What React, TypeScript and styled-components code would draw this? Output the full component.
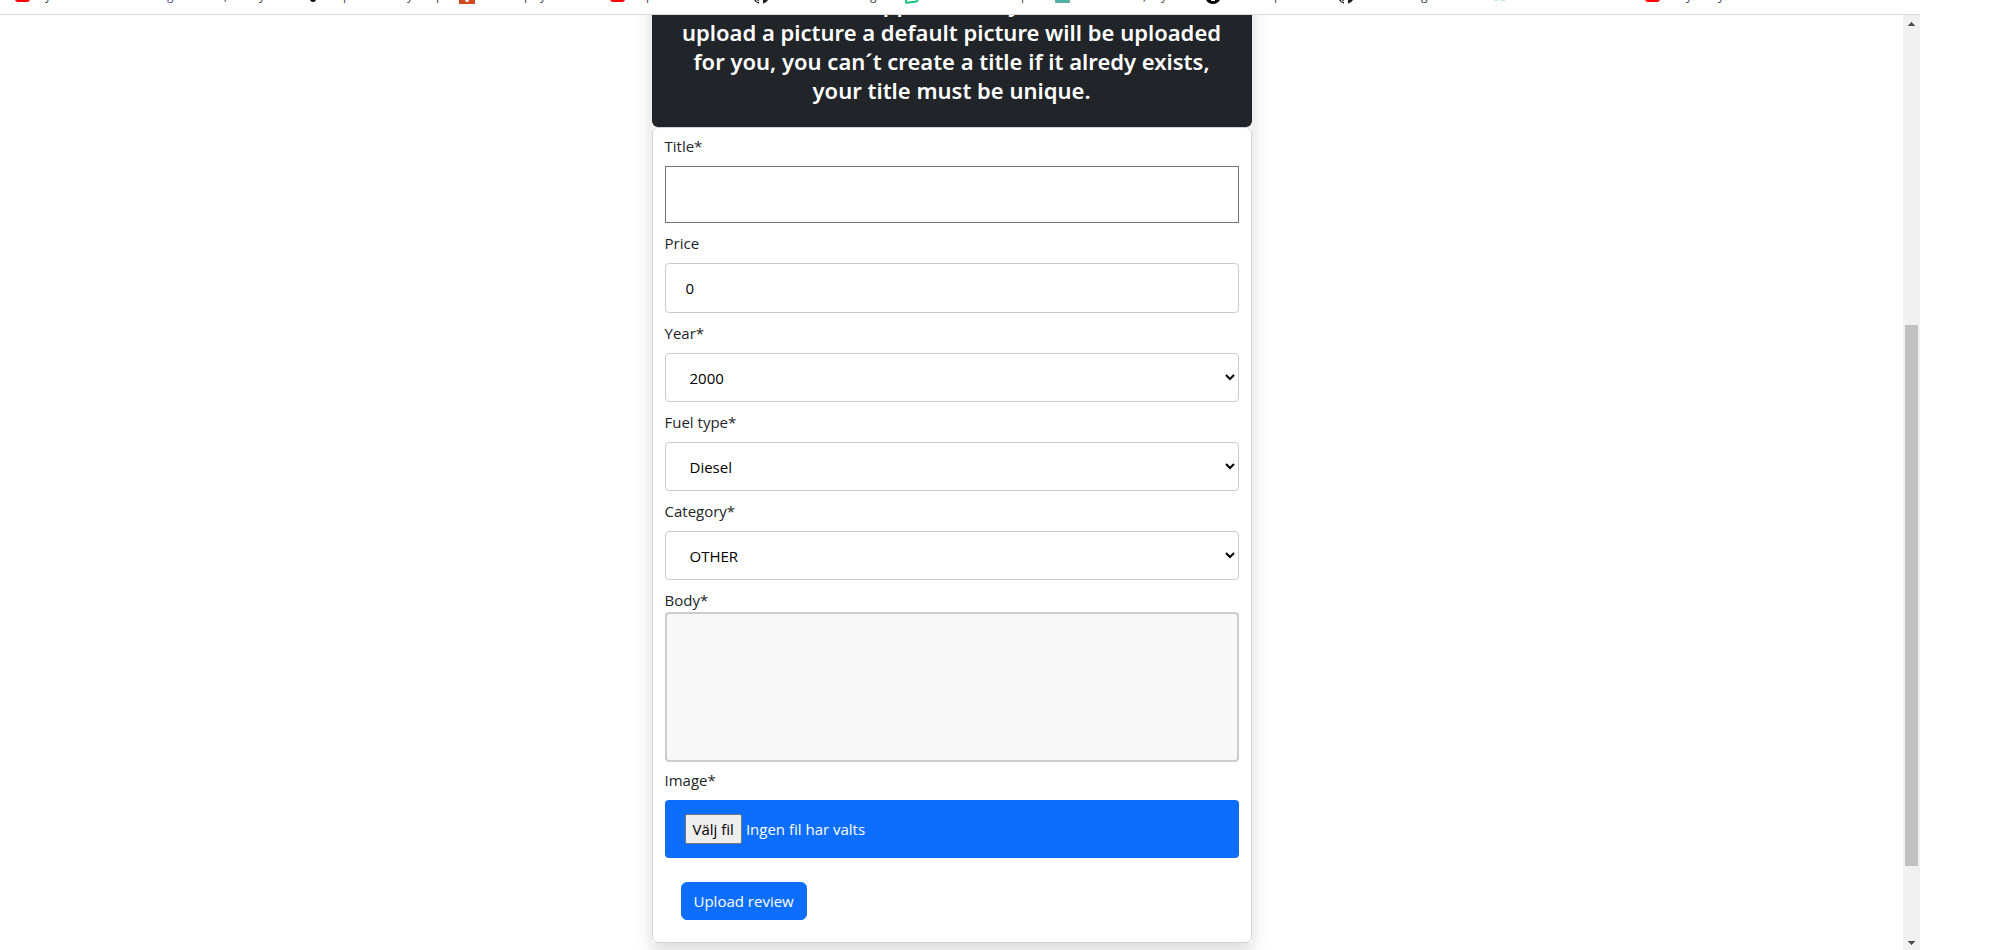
import React from "react";
import styled, { createGlobalStyle } from "styled-components";

const GlobalStyle = createGlobalStyle`
  *, *::before, *::after { box-sizing: border-box; }
  body {
    margin: 0;
    background: #fff;
    color: #212529;
    font-family: "Segoe UI", "Open Sans", "Noto Sans", sans-serif;
    font-size: 15px;
    line-height: 24px;
    overflow: hidden;
  }
`;

const Screen = styled.div`
  display: flex;
  flex-direction: column;
  height: 100vh;
  padding-right: 93px;
`;

const BookmarkBar = styled.div`
  flex: none;
  height: 15px;
  padding-left: 15px;
  border-bottom: 1px solid #dadada;
`;

const BookmarkRow = styled.div`
  display: flex;
  align-items: flex-end;
  height: 4px;
  overflow: hidden;
`;

const Bookmark = styled.a<{ $width: number }>`
  flex: none;
  display: flex;
  align-items: flex-end;
  width: ${(p) => p.$width}px;
  color: #3c4043;
  font-size: 12px;
  line-height: 16px;
  text-decoration: none;
`;

const Mark = styled.span<{ $gap: number; $color?: string }>`
  flex: none;
  width: 7px;
  margin-left: ${(p) => p.$gap}px;
  color: ${(p) => p.$color ?? "inherit"};
`;

const BookmarkIcon = styled.svg`
  flex: none;
  width: 16px;
  height: 16px;
`;

const Viewport = styled.div`
  flex: 1;
  display: flex;
  min-height: 0;
`;

const Content = styled.main`
  flex: 1;
  display: flex;
  justify-content: center;
  align-items: flex-start;
  min-width: 0;
  overflow: hidden;
`;

const Panel = styled.section`
  width: 600px;
  max-width: 100%;
  margin-top: -42px;
  background: #fff;
  box-shadow: 0 8px 16px rgba(0, 0, 0, 0.15);
`;

const Notice = styled.h4`
  margin: 0;
  padding: 16px 16px 22px;
  border-radius: 6px;
  background: #212529;
  color: #fff;
  font-family: "Segoe UI", "Noto Sans", sans-serif;
  font-size: 22px;
  font-weight: 600;
  line-height: 29px;
  text-align: center;
`;

const NoticeTopLine = styled.span`
  display: flex;
  justify-content: center;
  gap: 98px;
`;

const Form = styled.form`
  display: flex;
  flex-direction: column;
  padding: 6px 12px;
  border: 1px solid #ced4da;
  border-radius: 6px;
  background: #fff;
`;

const Label = styled.label`
  display: block;
`;

const TitleInput = styled.input`
  height: 57px;
  margin: 8px 0;
  padding: 12px 20px;
  border: 1px solid #767676;
  border-radius: 0;
  background: #fff;
  color: #000;
  font: inherit;
`;

const PriceInput = styled.input`
  height: 50px;
  margin: 8px 0;
  padding: 12px 20px;
  border: 1px solid #ccc;
  border-radius: 4px;
  background: #fff;
  color: #000;
  font: inherit;
`;

const Select = styled.select`
  height: 49px;
  margin: 8px 0;
  padding: 12px 20px;
  border: 1px solid #ccc;
  border-radius: 4px;
  background: #fff;
  color: #000;
  font: inherit;
`;

const BodyInput = styled.textarea`
  height: 150px;
  margin: 0 0 6px;
  padding: 12px 20px;
  border: 2px solid #ccc;
  border-radius: 4px;
  background: #f8f8f8;
  color: #000;
  font: inherit;
  resize: none;
`;

const FileField = styled.div`
  position: relative;
  display: flex;
  align-items: center;
  gap: 4px;
  height: 58px;
  margin: 8px 0;
  padding: 0 20px;
  border-radius: 4px;
  background: #0d6efd;
  color: #fff;
`;

const FileInput = styled.input`
  position: absolute;
  inset: 0;
  width: 100%;
  opacity: 0;
`;

const FileButton = styled.span`
  display: block;
  height: 30px;
  padding: 2px 7px;
  border: 1px solid #767676;
  border-radius: 2px;
  background: #efefef;
  color: #000;
`;

const Submit = styled.button`
  align-self: flex-start;
  height: 38px;
  margin: 16px;
  padding: 0 12px;
  border: 1px solid #0d6efd;
  border-radius: 6px;
  background: #0d6efd;
  color: #fff;
  font: inherit;
`;

const Scrollbar = styled.div`
  flex: none;
  display: flex;
  flex-direction: column;
  align-items: center;
  width: 17px;
  background: #f1f1f1;
`;

const ScrollArrow = styled.svg`
  flex: none;
  width: 17px;
  height: 17px;
  fill: #505050;
`;

const ScrollSpace = styled.div<{ $part: number }>`
  flex: ${(p) => p.$part};
`;

const ScrollThumb = styled.div`
  flex: 541;
  width: 13px;
  background: #c1c1c1;
`;

type IconKind = "video" | "dot" | "orange" | "github" | "green" | "teal" | "circle" | "dashes";

function SiteIcon({ kind }: { kind: IconKind }) {
  return (
    <BookmarkIcon viewBox="0 0 16 16" aria-hidden="true">
      {kind === "video" && <rect x="0" y="2" width="15" height="12" rx="3" fill="#f00" />}
      {kind === "dot" && <circle cx="8" cy="11" r="3" fill="#000" />}
      {kind === "orange" && (
        <>
          <rect width="16" height="16" fill="#d24a1e" />
          <circle cx="8" cy="12" r="2" fill="#fff" />
        </>
      )}
      {kind === "github" && (
        <path
          fill="#1b1f23"
          d="M8 0a8 8 0 0 0-2.5 15.6c.4.1.5-.2.5-.4v-1.4c-2 .4-2.6-.5-2.8-1-.1-.2-.5-1-.9-1.2-.3-.2-.7-.6 0-.6.7 0 1.2.6 1.3.9.8 1.3 2 1 2.5.7 0-.5.3-.9.5-1.100-1.800-.2-3.600-.9-3.600-4a3 3 0 0 1 .8-2.100c-.1-.2-.4-1 .1-2.100 0 0 .7-.2 2.200.8a7.500 7.500 0 0 1 4 0c1.500-1 2.200-.8 2.200-.8.4 1.100.2 1.900.1 2.100.5.600.8 1.300.8 2.100 0 3.100-1.900 3.800-3.700 4 .3.2.5.7.5 1.500v2.200c0 .2.1.5.5.4A8 8 0 0 0 8 0"
        />
      )}
      {kind === "green" && (
        <path d="M2 2v12q0 1 1 .8l9-1.300q1-.2 1.500-1.200L15 8" fill="none" stroke="#17c37b" strokeWidth="2" />
      )}
      {kind === "teal" && <rect y="-1" width="15" height="16" rx="1" fill="#54afa3" />}
      {kind === "circle" && (
        <>
          <circle cx="8" cy="8" r="8" fill="#000" />
          <rect x="6" y="12" width="4" height="1" fill="#fff" />
        </>
      )}
      {kind === "dashes" && <path d="M4 9v4M6 9v4M11 9v4M13 9v4" stroke="#7fd6bb" strokeWidth="1" />}
    </BookmarkIcon>
  );
}

interface Fragment {
  text: string;
  gap: number;
  color?: string;
}

const bookmarks: { icon: IconKind; width: number; marks: Fragment[] }[] = [
  {
    icon: "video",
    width: 290,
    marks: [
      { text: "y", gap: 14 },
      { text: "g", gap: 115, color: "#4a4f9c" },
      { text: ",", gap: 50 },
      { text: "y", gap: 28 },
    ],
  },
  {
    icon: "dot",
    width: 154,
    marks: [
      { text: "p", gap: 22 },
      { text: "y", gap: 57 },
      { text: "p", gap: 22 },
    ],
  },
  {
    icon: "orange",
    width: 151,
    marks: [
      { text: "p", gap: 49 },
      { text: "y", gap: 9 },
    ],
  },
  { icon: "video", width: 143, marks: [{ text: "p", gap: 20 }] },
  { icon: "github", width: 151, marks: [{ text: "g", gap: 101 }] },
  { icon: "green", width: 151, marks: [{ text: "p", gap: 101 }] },
  {
    icon: "teal",
    width: 150,
    marks: [
      { text: ",", gap: 72 },
      { text: "y", gap: 11 },
    ],
  },
  { icon: "circle", width: 133, marks: [{ text: "p", gap: 53 }] },
  { icon: "github", width: 153, marks: [{ text: "g", gap: 67 }] },
  { icon: "dashes", width: 154, marks: [] },
  {
    icon: "video",
    width: 150,
    marks: [
      { text: "y", gap: 25 },
      { text: "y", gap: 25 },
    ],
  },
];

export default function App() {
  return (
    <>
      <GlobalStyle />
      <Screen>
        <BookmarkBar>
          <BookmarkRow>
            {bookmarks.map((b, i) => (
              <Bookmark key={i} href="#" $width={b.width}>
                <SiteIcon kind={b.icon} />
                {b.marks.map((m, j) => (
                  <Mark key={j} $gap={m.gap} $color={m.color}>
                    {m.text}
                  </Mark>
                ))}
              </Bookmark>
            ))}
          </BookmarkRow>
        </BookmarkBar>
        <Viewport>
          <Content>
            <Panel>
              <Notice>
                <NoticeTopLine>
                  <span>pp</span>
                  <span>y</span>
                </NoticeTopLine>
                upload a picture a default picture will be uploaded
                <br />
                for you, you can´t create a title if it alredy exists,
                <br />
                your title must be unique.
              </Notice>
              <Form onSubmit={(e) => e.preventDefault()}>
                <Label htmlFor="title">Title*</Label>
                <TitleInput id="title" type="text" />
                <Label htmlFor="price">Price</Label>
                <PriceInput id="price" type="text" inputMode="numeric" defaultValue="0" />
                <Label htmlFor="year">Year*</Label>
                <Select id="year">
                  <option>2000</option>
                </Select>
                <Label htmlFor="fuel">Fuel type*</Label>
                <Select id="fuel">
                  <option>Diesel</option>
                </Select>
                <Label htmlFor="category">Category*</Label>
                <Select id="category">
                  <option>OTHER</option>
                </Select>
                <Label htmlFor="body">Body*</Label>
                <BodyInput id="body" />
                <Label htmlFor="image">Image*</Label>
                <FileField>
                  <FileButton>Välj fil</FileButton>
                  <span>Ingen fil har valts</span>
                  <FileInput id="image" type="file" />
                </FileField>
                <Submit type="submit">Upload review</Submit>
              </Form>
            </Panel>
          </Content>
          <Scrollbar>
            <ScrollArrow viewBox="0 0 17 17" shapeRendering="crispEdges" aria-hidden="true">
              <path d="M8 7h1v1h1v1h1v1h1v1H5v-1h1V9h1V8h1z" />
            </ScrollArrow>
            <ScrollSpace $part={293} />
            <ScrollThumb />
            <ScrollSpace $part={67} />
            <ScrollArrow viewBox="0 0 17 17" shapeRendering="crispEdges" aria-hidden="true">
              <path d="M5 8h7v1h-1v1h-1v1H9v1H8v-1H7v-1H6V9H5z" />
            </ScrollArrow>
          </Scrollbar>
        </Viewport>
      </Screen>
    </>
  );
}
